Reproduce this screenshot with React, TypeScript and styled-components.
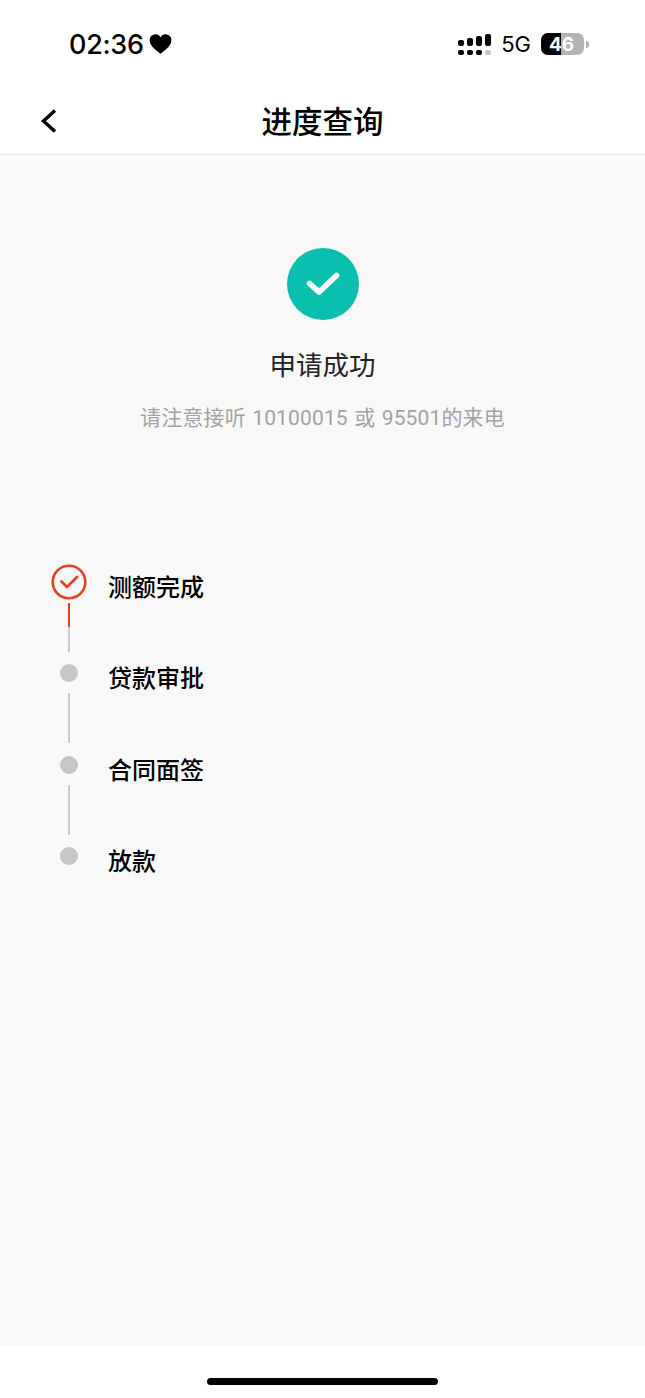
import React from "react"
import styled, { createGlobalStyle } from "styled-components"

const CJK = `"Noto Sans CJK SC", "Noto Sans", sans-serif`

const steps = [
  { label: "测额完成", done: true },
  { label: "贷款审批", done: false },
  { label: "合同面签", done: false },
  { label: "放款", done: false },
]

const signalBars = [6, 8, 10, 12]

export default function App() {
  return (
    <Page>
      <GlobalStyle />
      <StatusBar>
        <Clock>
          02:36
          <svg width="23" height="20" viewBox="0 0 24 21">
            <path
              d="M12 20.800C5 15.500.6 11.800.6 6.600A6 6 0 0 1 12 3.800a6 6 0 0 1 11.400 2.800c0 5.200-4.400 8.900-11.400 14.200z"
              fill="#000"
            />
          </svg>
        </Clock>
        <StatusRight>
          <Signal>
            {signalBars.map((height, i) => (
              <SignalColumn key={i}>
                <SignalBar $height={height} />
                <SignalDot $dim={i === 3} />
              </SignalColumn>
            ))}
          </Signal>
          <Network>5G</Network>
          <Battery>
            <BatteryBody>
              <BatteryLevel />
              <BatteryText>46</BatteryText>
            </BatteryBody>
            <BatteryCap />
          </Battery>
        </StatusRight>
      </StatusBar>

      <NavBar>
        <BackButton>
          <svg width="18" height="26" viewBox="0 0 18 26" fill="none">
            <path d="M15 2.500 3.500 13 15 23.500" stroke="#000" strokeWidth="3.400" />
          </svg>
        </BackButton>
        <NavTitle>进度查询</NavTitle>
      </NavBar>

      <Content>
        <Result>
          <SuccessIcon>
            <svg width="34" height="26" viewBox="0 0 34 26" fill="none">
              <path
                d="M3.500 12.500 13 21 30.500 4.500"
                stroke="#fff"
                strokeWidth="5.600"
                strokeLinecap="round"
                strokeLinejoin="round"
              />
            </svg>
          </SuccessIcon>
          <ResultTitle>申请成功</ResultTitle>
          <ResultHint>请注意接听 10100015 或 95501的来电</ResultHint>
        </Result>

        <Timeline>
          {steps.map((step, i) => (
            <Step key={step.label}>
              <Marker>
                <MarkerSlot>
                  {step.done ? (
                    <svg width="36" height="36" viewBox="0 0 36 36" fill="none">
                      <circle cx="18" cy="18" r="16.300" stroke="#e2441f" strokeWidth="2.600" />
                      <path
                        d="M10.500 17.500 16 23 26 13"
                        stroke="#e2441f"
                        strokeWidth="2.800"
                        strokeLinecap="round"
                        strokeLinejoin="round"
                      />
                    </svg>
                  ) : (
                    <Dot />
                  )}
                </MarkerSlot>
                {i < steps.length - 1 && <Connector $active={step.done} />}
              </Marker>
              <StepLabel>{step.label}</StepLabel>
            </Step>
          ))}
        </Timeline>
      </Content>

      <HomeArea>
        <HomeBar />
      </HomeArea>
    </Page>
  )
}

const GlobalStyle = createGlobalStyle`
  html, body {
    margin: 0;
    padding: 0;
    background: #fff;
  }
  * {
    box-sizing: border-box;
  }
`

const Page = styled.div`
  width: 645px;
  height: 1398px;
  display: flex;
  flex-direction: column;
  background: #fff;
  font-family: ${CJK};
  color: #000;
  overflow: hidden;
`

const StatusBar = styled.div`
  height: 88px;
  flex-shrink: 0;
  display: flex;
  align-items: center;
  justify-content: space-between;
  padding: 0 56px 0 69px;
`

const Clock = styled.div`
  display: flex;
  align-items: center;
  gap: 5px;
  font-family: "Inter", "Liberation Sans", sans-serif;
  font-size: 27px;
  font-weight: 500;
  letter-spacing: -0.3px;
`

const StatusRight = styled.div`
  display: flex;
  align-items: center;
`

const Signal = styled.div`
  display: flex;
  align-items: flex-end;
  gap: 3px;
  margin-right: 10px;
`

const SignalColumn = styled.div`
  display: flex;
  flex-direction: column;
  align-items: center;
  gap: 4px;
`

const SignalBar = styled.div<{ $height: number }>`
  width: 6px;
  height: ${({ $height }) => $height}px;
  border-radius: 2px;
  background: #000;
`

const SignalDot = styled.div<{ $dim: boolean }>`
  width: 6px;
  height: 5px;
  border-radius: 2px;
  background: ${({ $dim }) => ($dim ? "#c8c8c8" : "#000")};
`

const Network = styled.div`
  font-family: "Inter", "Liberation Sans", sans-serif;
  font-size: 22px;
  margin-right: 10px;
`

const Battery = styled.div`
  display: flex;
  align-items: center;
  gap: 2px;
`

const BatteryBody = styled.div`
  position: relative;
  width: 43px;
  height: 22px;
  border-radius: 7px;
  background: #b3b3b3;
  overflow: hidden;
`

const BatteryLevel = styled.div`
  width: 46%;
  height: 100%;
  background: #000;
`

const BatteryText = styled.div`
  position: absolute;
  inset: 0;
  display: flex;
  align-items: center;
  justify-content: center;
  padding-right: 2px;
  font-family: "Inter", "Liberation Sans", sans-serif;
  font-size: 19px;
  font-weight: 700;
  color: #fff;
`

const BatteryCap = styled.div`
  width: 3px;
  height: 7px;
  border-radius: 0 3px 3px 0;
  background: #b3b3b3;
`

const NavBar = styled.div`
  position: relative;
  height: 67px;
  flex-shrink: 0;
  display: flex;
  align-items: center;
  justify-content: center;
  border-bottom: 1px solid #e8e8e8;
`

const BackButton = styled.div`
  position: absolute;
  left: 40px;
  top: 20px;
  display: flex;
`

const NavTitle = styled.div`
  font-size: 30.500px;
  font-weight: 500;
  line-height: 66px;
  margin-top: -2px;
`

const Content = styled.div`
  flex: 1;
  display: flex;
  flex-direction: column;
  background: #f8f8f8;
`

const Result = styled.div`
  display: flex;
  flex-direction: column;
  align-items: center;
  padding-top: 93px;
`

const SuccessIcon = styled.div`
  width: 72px;
  height: 72px;
  border-radius: 50%;
  display: flex;
  align-items: center;
  justify-content: center;
  background: #08c0ad;
`

const ResultTitle = styled.div`
  margin-top: 25px;
  font-size: 26.500px;
  line-height: 38px;
  color: #222;
`

const ResultHint = styled.div`
  margin-top: 20px;
  font-family: "Roboto", ${CJK};
  font-size: 21px;
  letter-spacing: 0.15px;
  word-spacing: 1px;
  line-height: 30px;
  color: #a3a3a3;
`

const Timeline = styled.div`
  display: flex;
  flex-direction: column;
  padding: 131px 0 0 51px;
`

const Step = styled.div`
  display: flex;
  height: 91.300px;
`

const Marker = styled.div`
  width: 36px;
  display: flex;
  flex-direction: column;
  align-items: center;
`

const MarkerSlot = styled.div`
  width: 36px;
  height: 36px;
  display: flex;
  align-items: center;
  justify-content: center;
`

const Dot = styled.div`
  width: 18px;
  height: 18px;
  border-radius: 50%;
  background: #c6c6c6;
`

const Connector = styled.div<{ $active: boolean }>`
  width: 2px;
  height: ${({ $active }) => ($active ? 49 : 50)}px;
  margin-top: ${({ $active }) => ($active ? 3 : 2)}px;
  background: ${({ $active }) =>
    $active
      ? "linear-gradient(to bottom, #e2441f 0 49%, #c9c9c9 49% 100%)"
      : "#c9c9c9"};
`

const StepLabel = styled.div`
  margin-left: 21px;
  margin-top: 4px;
  font-size: 24px;
  font-weight: 500;
  line-height: 36px;
`

const HomeArea = styled.div`
  height: 52px;
  flex-shrink: 0;
  display: flex;
  justify-content: center;
  padding-top: 32px;
  background: #fff;
`

const HomeBar = styled.div`
  width: 231px;
  height: 7px;
  border-radius: 4px;
  background: #000;
`
